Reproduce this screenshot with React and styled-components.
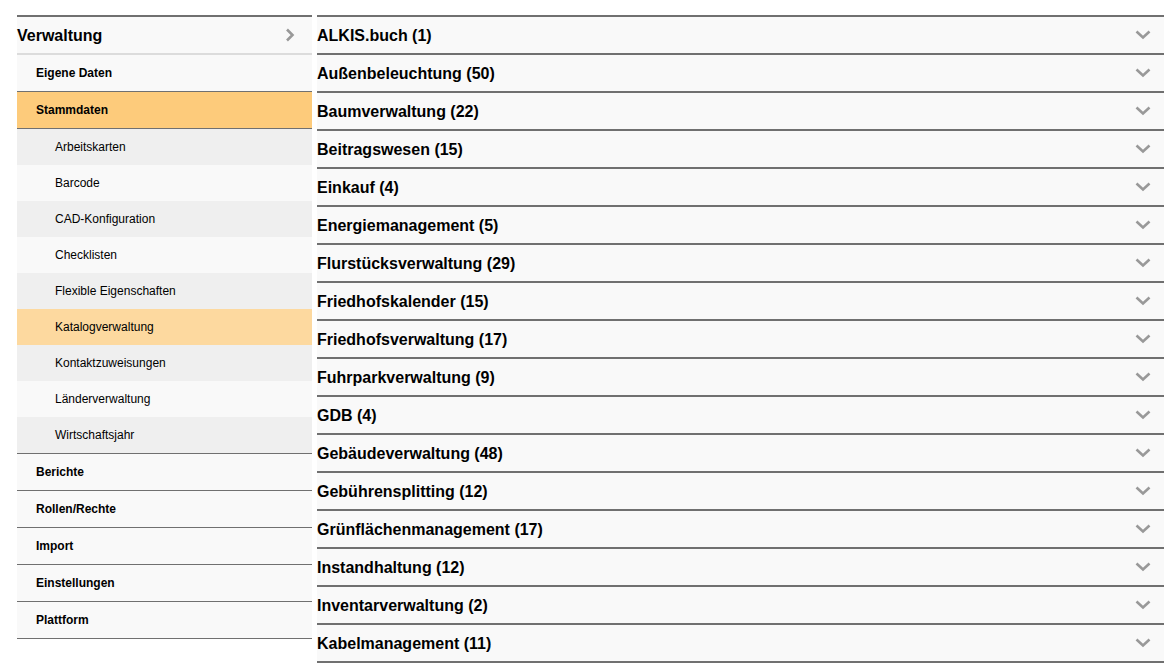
import React from 'react'
import styled, { createGlobalStyle } from 'styled-components'

const Global = createGlobalStyle`
  body {
    margin: 0;
    background: #ffffff;
    font-family: "Liberation Sans", Arial, sans-serif;
    color: #000;
  }
`

const Page = styled.div`
  display: flex;
  align-items: flex-start;
  gap: 5px;
  padding: 15px 5px 0 17px;
`

const Sidebar = styled.nav`
  width: 295px;
  flex-shrink: 0;
  border-top: 2px solid #707070;
  border-bottom: 1px solid #707070;
`

const SideHeader = styled.div`
  height: 34px;
  padding-top: 2px;
  display: flex;
  align-items: center;
  justify-content: space-between;
  background: #f9f9f9;
  border-bottom: 2px solid #dcdcdc;
  font-size: 16px;
  font-weight: bold;
  padding-right: 14px;
`

const NavItem = styled.div`
  height: 36px;
  display: flex;
  align-items: center;
  padding-left: 19px;
  font-size: 12px;
  font-weight: bold;
  background: ${p => (p.$active ? '#fdcb7b' : '#f9f9f9')};
  & + & {
    border-top: 1px solid #707070;
  }
`

const SubList = styled.div`
  border-top: 1px solid #707070;
  & + ${NavItem} {
    border-top: 1px solid #707070;
  }
`

const SubItem = styled.div`
  height: 36px;
  display: flex;
  align-items: center;
  padding-left: 38px;
  font-size: 12px;
  background: ${p => (p.$active ? '#fdd99f' : p.$odd ? '#f9f9f9' : '#efefef')};
`

const Accordion = styled.div`
  flex: 1;
  border-top: 2px solid #707070;
`

const AccRow = styled.div`
  height: 34px;
  padding-top: 2px;
  display: flex;
  align-items: center;
  justify-content: space-between;
  background: #f9f9f9;
  border-bottom: 2px solid #707070;
  font-size: 16px;
  font-weight: bold;
  padding-right: 13px;
`

const Chevron = ({ dir }) => (
  <svg width="16" height="16" viewBox="0 0 16 16">
    {dir === 'right' ? (
      <polyline points="5,1.5 10.5,7 5,12.5" fill="none" stroke="#999" strokeWidth="2.6" />
    ) : (
      <polyline points="1.5,3.5 8,9.5 14.5,3.5" fill="none" stroke="#999" strokeWidth="2.6" />
    )}
  </svg>
)

const subItems = [
  'Arbeitskarten',
  'Barcode',
  'CAD-Konfiguration',
  'Checklisten',
  'Flexible Eigenschaften',
  'Katalogverwaltung',
  'Kontaktzuweisungen',
  'Länderverwaltung',
  'Wirtschaftsjahr',
]

const bottomItems = ['Berichte', 'Rollen/Rechte', 'Import', 'Einstellungen', 'Plattform']

const modules = [
  'ALKIS.buch (1)',
  'Außenbeleuchtung (50)',
  'Baumverwaltung (22)',
  'Beitragswesen (15)',
  'Einkauf (4)',
  'Energiemanagement (5)',
  'Flurstücksverwaltung (29)',
  'Friedhofskalender (15)',
  'Friedhofsverwaltung (17)',
  'Fuhrparkverwaltung (9)',
  'GDB (4)',
  'Gebäudeverwaltung (48)',
  'Gebührensplitting (12)',
  'Grünflächenmanagement (17)',
  'Instandhaltung (12)',
  'Inventarverwaltung (2)',
  'Kabelmanagement (11)',
]

export default function App() {
  return (
    <>
      <Global />
      <Page>
        <Sidebar>
          <SideHeader>
            Verwaltung
            <Chevron dir="right" />
          </SideHeader>
          <NavItem>Eigene Daten</NavItem>
          <NavItem $active>Stammdaten</NavItem>
          <SubList>
            {subItems.map((s, i) => (
              <SubItem key={s} $odd={i % 2 === 1} $active={s === 'Katalogverwaltung'}>
                {s}
              </SubItem>
            ))}
          </SubList>
          {bottomItems.map(b => (
            <NavItem key={b}>{b}</NavItem>
          ))}
        </Sidebar>
        <Accordion>
          {modules.map(m => (
            <AccRow key={m}>
              {m}
              <Chevron />
            </AccRow>
          ))}
        </Accordion>
      </Page>
    </>
  )
}
